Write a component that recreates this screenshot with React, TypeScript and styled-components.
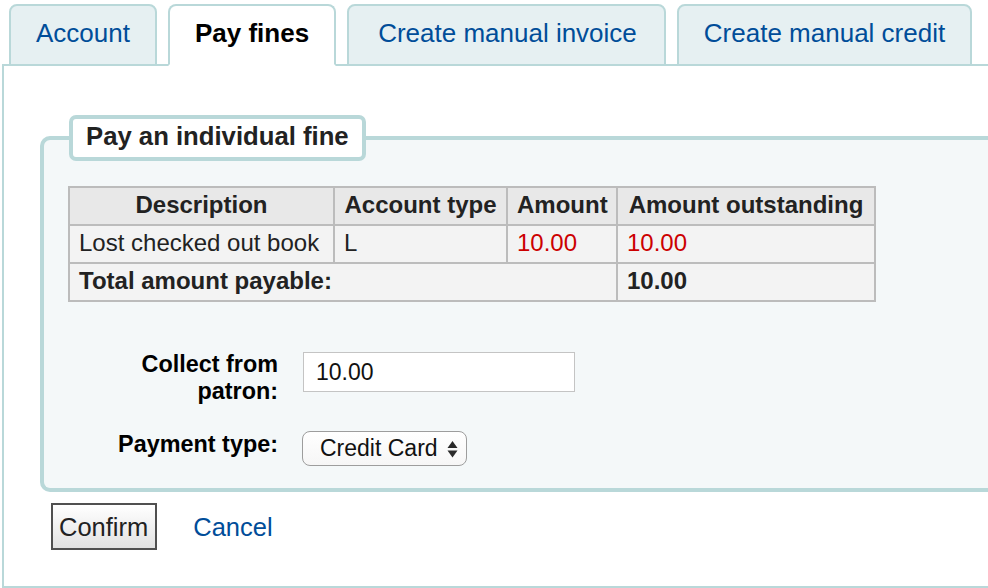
import React from "react";
import styled, { createGlobalStyle } from "styled-components";

const GlobalStyle = createGlobalStyle`
  html, body { margin: 0; padding: 0; background: #fff; overflow: hidden; }
  body { font-family: "Liberation Sans", Arial, Helvetica, sans-serif; color: #000; }
  * { box-sizing: border-box; }
`;

const Page = styled.div`
  width: 1060px;
  padding: 4px 0 0 2px;
`;

const TabList = styled.ul`
  display: flex;
  align-items: flex-end;
  list-style: none;
  margin: 0 0 -2px 0;
  padding: 0 0 0 7px;
  gap: 11px;
  position: relative;
  z-index: 1;
`;

const Tab = styled.li<{ $active?: boolean; $wide?: boolean }>`
  height: 62px;
  padding: ${(p) => (p.$wide ? "0 27px 4px 29px" : "0 25px 4px")};
  border: 2px solid #b9d8d9;
  border-bottom-color: ${(p) => (p.$active ? "#fff" : "#b9d8d9")};
  border-radius: 8px 8px 0 0;
  background: ${(p) => (p.$active ? "#fff" : "#e6f0f2")};
  font-size: 26px;
  line-height: 54px;
  font-weight: ${(p) => (p.$active ? 700 : 400)};
  color: #000;
  white-space: nowrap;
`;

const TabLink = styled.a`
  color: #004d99;
  text-decoration: none;
`;

const Panel = styled.div`
  border: 2px solid #b9d8d9;
  border-right: none;
  padding: 0 0 36px 0;
`;

const Fieldset = styled.fieldset`
  margin: 49px 0 0 36px;
  padding: 25px 24px 22px;
  border: 4px solid #b9d8d9;
  border-right: none;
  border-radius: 10px 0 0 10px;
  background: #f4f8f9;
  min-width: 0;
`;

const Legend = styled.legend`
  margin-left: 1px;
  padding: 0 13px 4px;
  border: 4px solid #b9d8d9;
  border-radius: 7px;
  background: #fff;
  font-size: 25.7px;
  font-weight: 700;
  line-height: 34px;
  color: #222;
`;

const Table = styled.table`
  border-collapse: collapse;
  table-layout: fixed;
  width: 806px;
  font-size: 24px;
  color: #222;
`;

const HeadCell = styled.th`
  background: #e8e8e8;
  border: 2px solid #bcbcbc;
  padding: 4px 9px 7px;
  line-height: 25px;
  font-weight: 700;
  text-align: center;
  white-space: nowrap;
`;

const Cell = styled.td<{ $red?: boolean; $bold?: boolean }>`
  background: #f3f3f3;
  border: 2px solid #bcbcbc;
  padding: 4px 9px 7px;
  line-height: 25px;
  text-align: left;
  white-space: nowrap;
  color: ${(p) => (p.$red ? "#cc0000" : "#222")};
  font-weight: ${(p) => (p.$bold ? 700 : 400)};
`;

const FormList = styled.div`
  display: flex;
  flex-direction: column;
  gap: 26px;
  margin-top: 49px;
`;

const FormRow = styled.div`
  display: flex;
  align-items: flex-start;
  gap: 25px;
`;

const Label = styled.label`
  width: 210px;
  flex: none;
  text-align: right;
  font-size: 23.4px;
  font-weight: 700;
  line-height: 27px;
  color: #000;
`;

const TextInput = styled.input`
  width: 272px;
  height: 40px;
  margin-top: 1px;
  padding: 0 12px;
  border: 1px solid #c4c4c4;
  background: #fff;
  font-family: "Liberation Sans", Arial, sans-serif;
  font-size: 23px;
  color: #111;
  outline: none;
`;

const SelectBox = styled.div`
  display: flex;
  align-items: center;
  gap: 9px;
  height: 35px;
  margin-left: -1px;
  padding: 0 8px 0 17px;
  border: 1px solid #9d9d9d;
  border-radius: 8px;
  background: linear-gradient(#ffffff, #f6f6f6);
  font-size: 23px;
  line-height: 33px;
  color: #111;
  white-space: nowrap;
`;

const Actions = styled.div`
  display: flex;
  align-items: baseline;
  gap: 36px;
  margin: 11px 0 0 47px;
`;

const ConfirmButton = styled.button`
  height: 47px;
  padding: 2px 7px 0 6px;
  border: 2px solid #505050;
  border-radius: 0;
  background: linear-gradient(#ffffff, #e2e2e2);
  font-family: "Liberation Sans", Arial, sans-serif;
  font-size: 25.5px;
  line-height: 41px;
  color: #222;
`;

const CancelLink = styled.a`
  font-size: 25.5px;
  color: #004d99;
  text-decoration: none;
`;

const Arrows = () => (
  <svg width="11" height="18" viewBox="0 0 11 18" aria-hidden="true">
    <path d="M0.5 8 L5.5 1 L10.5 8 Z" fill="#2a2a2a" />
    <path d="M0.5 10.5 L5.5 17.5 L10.5 10.5 Z" fill="#2a2a2a" />
  </svg>
);

export default function App() {
  return (
    <>
      <GlobalStyle />
      <Page>
        <TabList>
          <Tab>
            <TabLink href="#">Account</TabLink>
          </Tab>
          <Tab $active>Pay fines</Tab>
          <Tab $wide>
            <TabLink href="#">Create manual invoice</TabLink>
          </Tab>
          <Tab>
            <TabLink href="#">Create manual credit</TabLink>
          </Tab>
        </TabList>
        <Panel>
          <Fieldset>
            <Legend>Pay an individual fine</Legend>
            <Table>
              <colgroup>
                <col style={{ width: 265 }} />
                <col style={{ width: 173 }} />
                <col style={{ width: 110 }} />
                <col style={{ width: 258 }} />
              </colgroup>
              <thead>
                <tr>
                  <HeadCell>Description</HeadCell>
                  <HeadCell>Account type</HeadCell>
                  <HeadCell>Amount</HeadCell>
                  <HeadCell>Amount outstanding</HeadCell>
                </tr>
              </thead>
              <tbody>
                <tr>
                  <Cell>Lost checked out book</Cell>
                  <Cell>L</Cell>
                  <Cell $red>10.00</Cell>
                  <Cell $red>10.00</Cell>
                </tr>
                <tr>
                  <Cell colSpan={3} $bold>
                    Total amount payable:
                  </Cell>
                  <Cell $bold>10.00</Cell>
                </tr>
              </tbody>
            </Table>
            <FormList>
              <FormRow>
                <Label htmlFor="paid">Collect from patron:</Label>
                <TextInput id="paid" defaultValue="10.00" />
              </FormRow>
              <FormRow>
                <Label>Payment type:</Label>
                <SelectBox>
                  <span>Credit Card</span>
                  <Arrows />
                </SelectBox>
              </FormRow>
            </FormList>
          </Fieldset>
          <Actions>
            <ConfirmButton type="button">Confirm</ConfirmButton>
            <CancelLink href="#">Cancel</CancelLink>
          </Actions>
        </Panel>
      </Page>
    </>
  );
}
